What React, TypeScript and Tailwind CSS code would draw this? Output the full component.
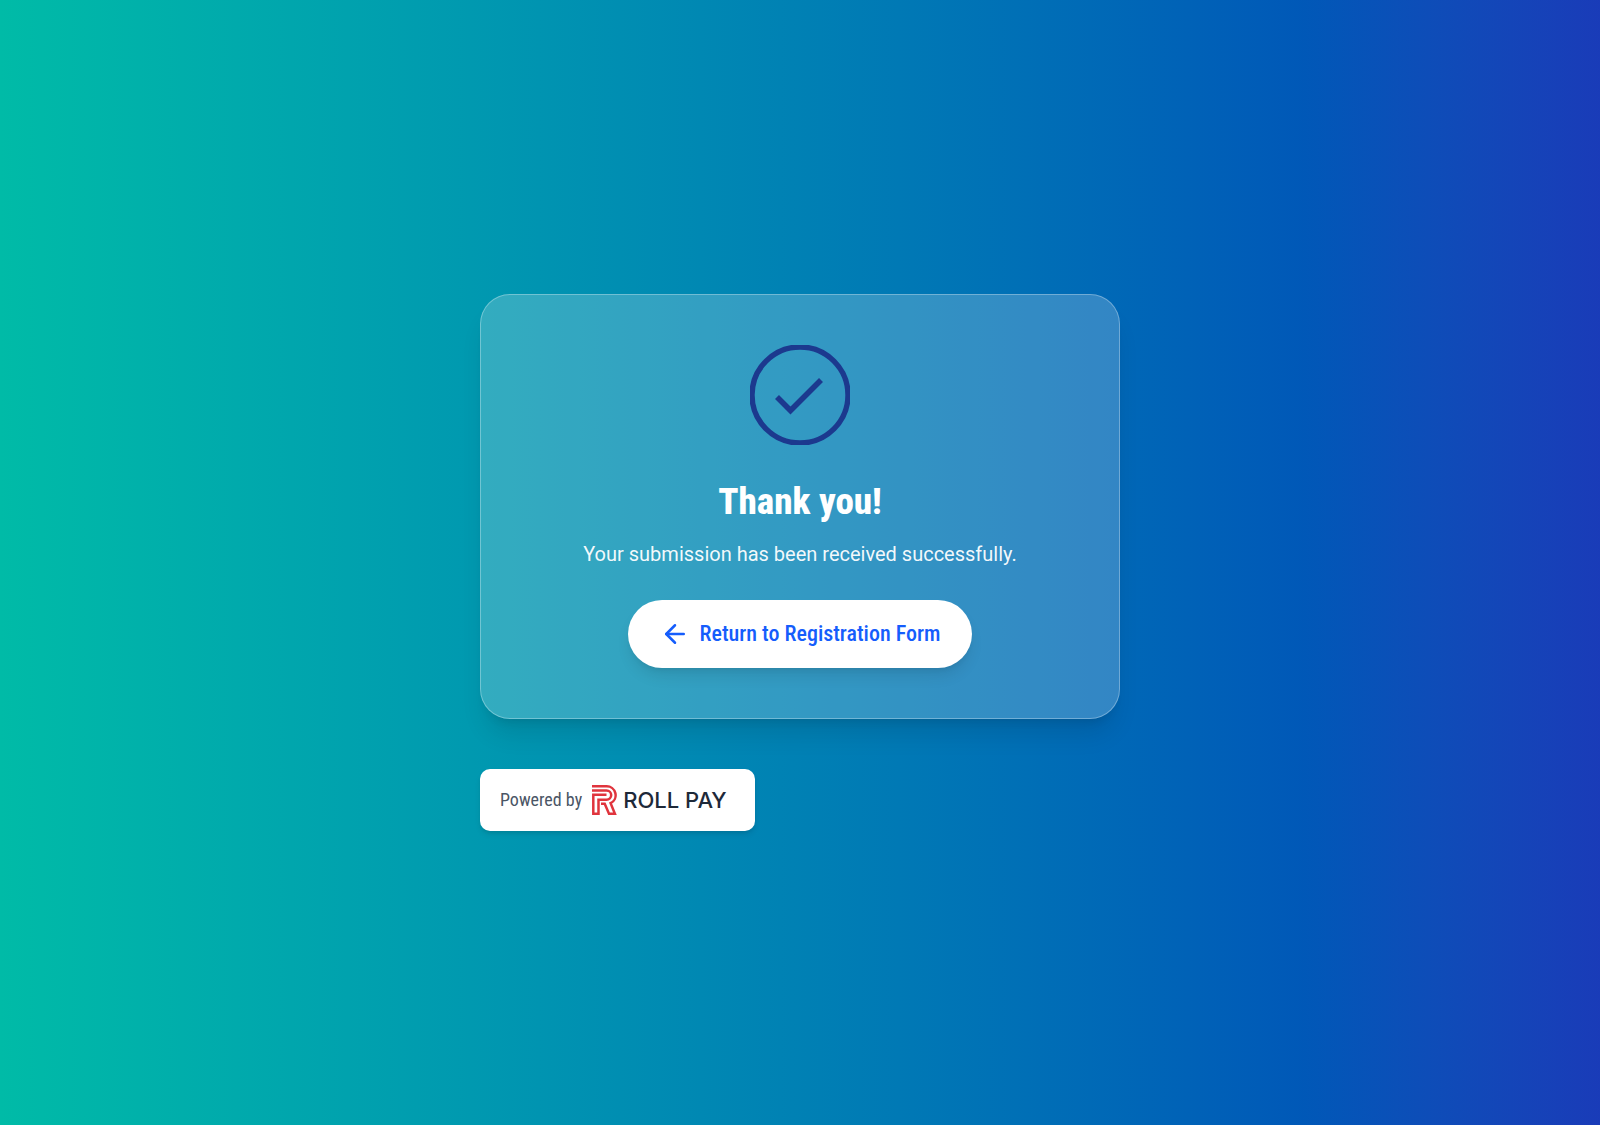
import { ArrowLeft } from 'lucide-react';

const condensed = "font-['Roboto_Condensed',Roboto,sans-serif]";

const SuccessIcon = () => (
  <svg viewBox="0 0 100 100" className="size-[100px] text-blue-900" fill="none" stroke="currentColor" aria-hidden="true">
    <circle cx="50" cy="50" r="48" strokeWidth="5.4" />
    <path d="M27 52 40.5 65.5 71 35" strokeWidth="5.6" />
  </svg>
);

const RollPayMark = () => (
  <svg viewBox="0 0 25 30" className="h-[30px] w-[25px]" fill="none" stroke="#e0343d" strokeWidth="2.5" aria-hidden="true">
    <path d="M0 1.300H14.500A8.900 8.900 0 0 1 18.600 18.200L22.900 28.700H17L12.700 18.800H9" />
    <path d="M0 5.400H14.500A4.700 4.700 0 0 1 14.500 14.800H6.500V28.700H1.300V9.800H14.500" />
  </svg>
);

const PoweredBy = () => (
  <div className="flex w-fit items-center rounded-[10px] bg-white px-5 py-4 shadow-md">
    <span className="mr-2.5 text-lg leading-[30px] text-gray-600">Powered by</span>
    <RollPayMark />
    <span className="ml-1.5 pr-2 font-[Inter,sans-serif] text-[22px] leading-[30px] font-medium text-gray-800">
      ROLL PAY
    </span>
  </div>
);

const App = () => {
  return (
    <main className={`flex min-h-screen items-center justify-center bg-linear-to-r from-teal-500 to-blue-800 ${condensed}`}>
      <div className="w-full max-w-[640px]">
        <section className="flex flex-col items-center rounded-[30px] border border-white/30 bg-white/20 p-[50px] text-center text-white shadow-xl">
          <SuccessIcon />
          <h1 className="mt-[35px] text-[37px] leading-[44px] font-extrabold">Thank you!</h1>
          <p className="mt-4 font-[Roboto,sans-serif] text-xl leading-[28px] text-white/95">
            Your submission has been received successfully.
          </p>
          <a
            href="#"
            className="mt-8 flex items-center gap-2.5 rounded-full bg-white px-8 py-5 text-[22px] leading-[28px] font-medium text-blue-600 shadow-lg"
          >
            <ArrowLeft className="-my-1 size-[30px]" />
            Return to Registration Form
          </a>
        </section>
        <footer className="mt-[50px]">
          <PoweredBy />
        </footer>
      </div>
    </main>
  );
};

export default App;
